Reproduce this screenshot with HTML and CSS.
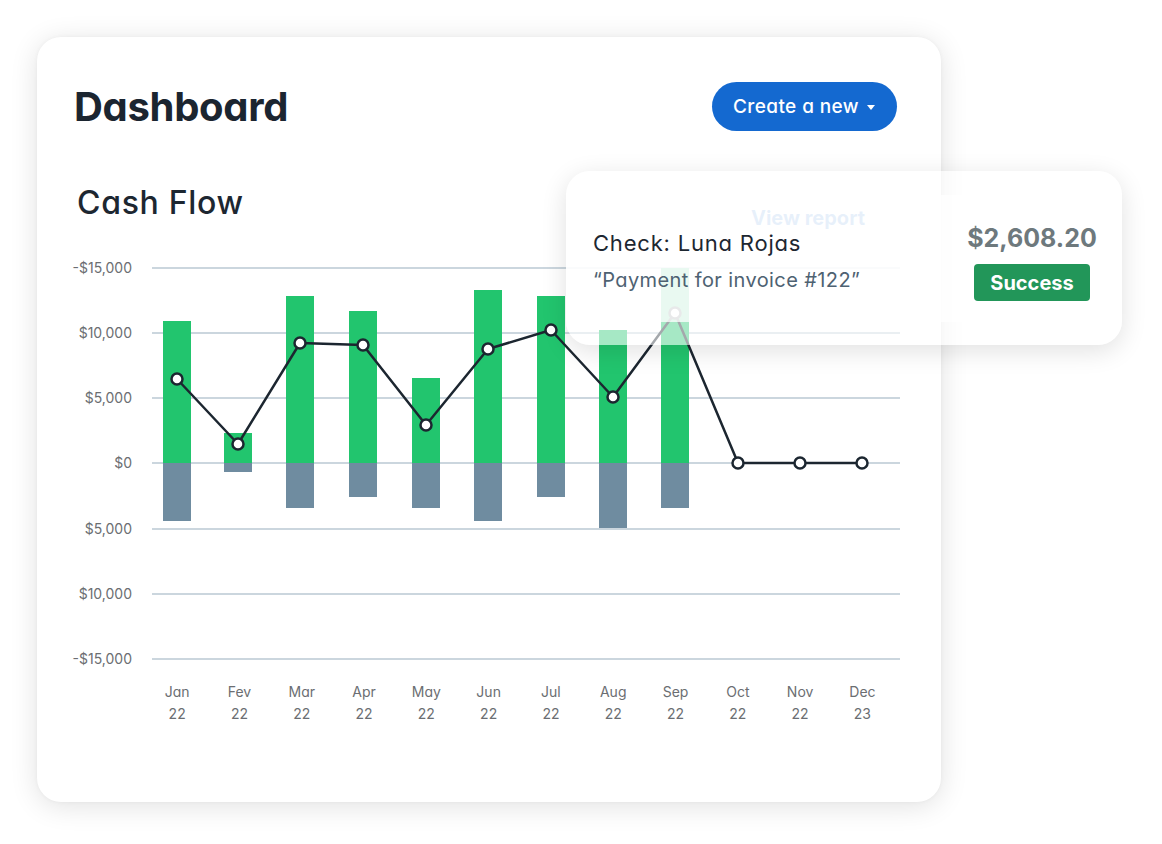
FILE: index.html
```html
<!DOCTYPE html>
<html>
<head>
<meta charset="utf-8">
<link rel="stylesheet" href="styles.css">
</head>
<body>
<div class="stage">
  <section class="dashboard">
    <header class="dash-header">
      <h1 class="dash-title">Dashboard</h1>
      <button class="btn-create">Create a new <span class="caret"></span></button>
    </header>
    <div class="section-header">
      <h2 class="section-title">Cash Flow</h2>
      <a class="view-report">View report</a>
    </div>
    <div class="chart">
      <div class="y-axis">
        <span>-$15,000</span>
        <span>$10,000</span>
        <span>$5,000</span>
        <span>$0</span>
        <span>$5,000</span>
        <span>$10,000</span>
        <span>-$15,000</span>
      </div>
      <svg class="plot" width="748" height="407" viewBox="152 260 748 407">
        <g class="grid">
          <line x1="152" x2="900" y1="268" y2="268"/>
          <line x1="152" x2="900" y1="333" y2="333"/>
          <line x1="152" x2="900" y1="398" y2="398"/>
          <line x1="152" x2="900" y1="463" y2="463"/>
          <line x1="152" x2="900" y1="529" y2="529"/>
          <line x1="152" x2="900" y1="594" y2="594"/>
          <line x1="152" x2="900" y1="659" y2="659"/>
        </g>
        <g class="bars-in">
          <rect x="163" y="321" width="28" height="142"/>
          <rect x="224" y="433" width="28" height="30"/>
          <rect x="286" y="296" width="28" height="167"/>
          <rect x="349" y="311" width="28" height="152"/>
          <rect x="412" y="378" width="28" height="85"/>
          <rect x="474" y="290" width="28" height="173"/>
          <rect x="537" y="296" width="28" height="167"/>
          <rect x="599" y="330" width="28" height="133"/>
          <rect x="661" y="268" width="28" height="195"/>
        </g>
        <g class="bars-out">
          <rect x="163" y="463" width="28" height="58"/>
          <rect x="224" y="463" width="28" height="9"/>
          <rect x="286" y="463" width="28" height="45"/>
          <rect x="349" y="463" width="28" height="34"/>
          <rect x="412" y="463" width="28" height="45"/>
          <rect x="474" y="463" width="28" height="58"/>
          <rect x="537" y="463" width="28" height="34"/>
          <rect x="599" y="463" width="28" height="65"/>
          <rect x="661" y="463" width="28" height="45"/>
        </g>
        <polyline class="trend" points="177,379 238,444 300,343 363,345 426,425 488,349 551,330 613,397 675,313 738,463 800,463 862,463"/>
        <g class="dots">
          <circle cx="177" cy="379" r="5.5"/>
          <circle cx="238" cy="444" r="5.5"/>
          <circle cx="300" cy="343" r="5.5"/>
          <circle cx="363" cy="345" r="5.5"/>
          <circle cx="426" cy="425" r="5.5"/>
          <circle cx="488" cy="349" r="5.5"/>
          <circle cx="551" cy="330" r="5.5"/>
          <circle cx="613" cy="397" r="5.5"/>
          <circle cx="675" cy="313" r="5.5"/>
          <circle cx="738" cy="463" r="5.5"/>
          <circle cx="800" cy="463" r="5.5"/>
          <circle cx="862" cy="463" r="5.5"/>
        </g>
      </svg>
    </div>
    <div class="x-axis">
      <span>Jan<br>22</span>
      <span>Fev<br>22</span>
      <span>Mar<br>22</span>
      <span>Apr<br>22</span>
      <span>May<br>22</span>
      <span>Jun<br>22</span>
      <span>Jul<br>22</span>
      <span>Aug<br>22</span>
      <span>Sep<br>22</span>
      <span>Oct<br>22</span>
      <span>Nov<br>22</span>
      <span>Dec<br>23</span>
    </div>
  </section>

  <aside class="toast">
    <div class="toast-main">
      <div class="toast-title">Check: Luna Rojas</div>
      <div class="toast-note">“Payment for invoice #122”</div>
    </div>
    <div class="toast-side">
      <div class="toast-amount">$2,608.20</div>
      <div class="badge">Success</div>
    </div>
  </aside>
</div>
</body>
</html>
```

FILE: styles.css
```css
* { box-sizing: border-box; }

html, body {
  margin: 0;
  padding: 0;
  background: #ffffff;
}

body {
  font-family: "Inter", "Lato", "Noto Sans", sans-serif;
  font-feature-settings: "cv11" 1;
  color: #1d2731;
}

.stage {
  position: relative;
  width: 1162px;
  height: 844px;
  padding: 37px 0 0 37px;
}

.dashboard {
  width: 904px;
  height: 765px;
  background: #ffffff;
  border-radius: 24px;
  box-shadow: 0 4px 28px rgba(0, 0, 0, 0.12), 0 0 4px rgba(0, 0, 0, 0.04);
  padding: 45px 44px 0 37px;
}

.dash-header {
  display: flex;
  align-items: center;
  justify-content: space-between;
  height: 49px;
}

.dash-title {
  margin: 0;
  font-size: 40px;
  font-weight: 700;
  letter-spacing: -0.3px;
  color: #1b2530;
}

.btn-create {
  display: flex;
  align-items: center;
  gap: 8px;
  height: 49px;
  padding: 0 22px 0 21px;
  border: none;
  border-radius: 25px;
  background: #1469d0;
  color: #ffffff;
  font-family: inherit;
  font-feature-settings: "cv11" 1;
  font-size: 19px;
  font-weight: 500;
  letter-spacing: 0.4px;
}

.caret {
  width: 0;
  height: 0;
  border-left: 4.5px solid transparent;
  border-right: 4.5px solid transparent;
  border-top: 5px solid #ffffff;
  margin-top: 1px;
}

.section-header {
  display: flex;
  align-items: flex-start;
  justify-content: space-between;
  margin-top: 52px;
  padding-left: 3px;
  padding-right: 32px;
}

.section-title {
  margin: 0;
  font-size: 32px;
  font-weight: 500;
  line-height: 40px;
  letter-spacing: 0.7px;
  color: #1d2731;
}

.view-report {
  margin-top: 23px;
  font-size: 20px;
  font-weight: 700;
  color: #1469d0;
}

.chart {
  display: flex;
  gap: 20px;
  margin-top: 30px;
  margin-left: -2px;
}

.y-axis {
  flex: 0 0 60px;
  height: 407px;
  display: flex;
  flex-direction: column;
  justify-content: space-between;
  align-items: flex-end;
  font-size: 14px;
  line-height: 16px;
  color: #6b6e72;
}

.plot {
  display: block;
  flex: 0 0 748px;
}

.grid line {
  stroke: #bac8d3;
  stroke-width: 1.5;
}

.bars-in rect { fill: #22c56e; }
.bars-out rect { fill: #6f8ca0; }

.trend {
  fill: none;
  stroke: #1c2630;
  stroke-width: 2.5;
  stroke-linejoin: round;
}

.dots circle {
  fill: #ffffff;
  stroke: #1c2630;
  stroke-width: 2.5;
}

.x-axis {
  display: grid;
  grid-template-columns: repeat(12, 62.3px);
  margin-top: 14px;
  margin-left: 72px;
  font-size: 14px;
  line-height: 22px;
  color: #6b6e72;
  text-align: center;
}

.toast {
  position: absolute;
  left: 566px;
  top: 171px;
  width: 556px;
  height: 174px;
  display: flex;
  align-items: stretch;
  padding: 24px 25px 23px 0;
  border-radius: 24px;
  background: rgba(255, 255, 255, 0.6);
  box-shadow: 0 6px 26px rgba(0, 0, 0, 0.12);
}

.toast-main {
  flex: 0 0 401px;
  display: flex;
  flex-direction: column;
  justify-content: center;
  gap: 8px;
  padding-left: 27px;
  padding-top: 4px;
  background: rgba(255, 255, 255, 0.75);
}

.toast-title {
  font-size: 22px;
  line-height: 30px;
  letter-spacing: 0.8px;
  color: #1d2731;
}

.toast-note {
  font-size: 20px;
  line-height: 28px;
  letter-spacing: 0.4px;
  color: #4e6272;
}

.toast-side {
  flex: 1;
  display: flex;
  flex-direction: column;
  align-items: center;
  justify-content: center;
  gap: 10px;
  padding-top: 6px;
}

.toast-amount {
  font-size: 25px;
  font-weight: 700;
  line-height: 32px;
  color: #6e797d;
}

.badge {
  width: 116px;
  height: 37px;
  display: flex;
  align-items: center;
  justify-content: center;
  border-radius: 4px;
  background: #229659;
  color: #ffffff;
  font-size: 20px;
  font-weight: 700;
}
```
